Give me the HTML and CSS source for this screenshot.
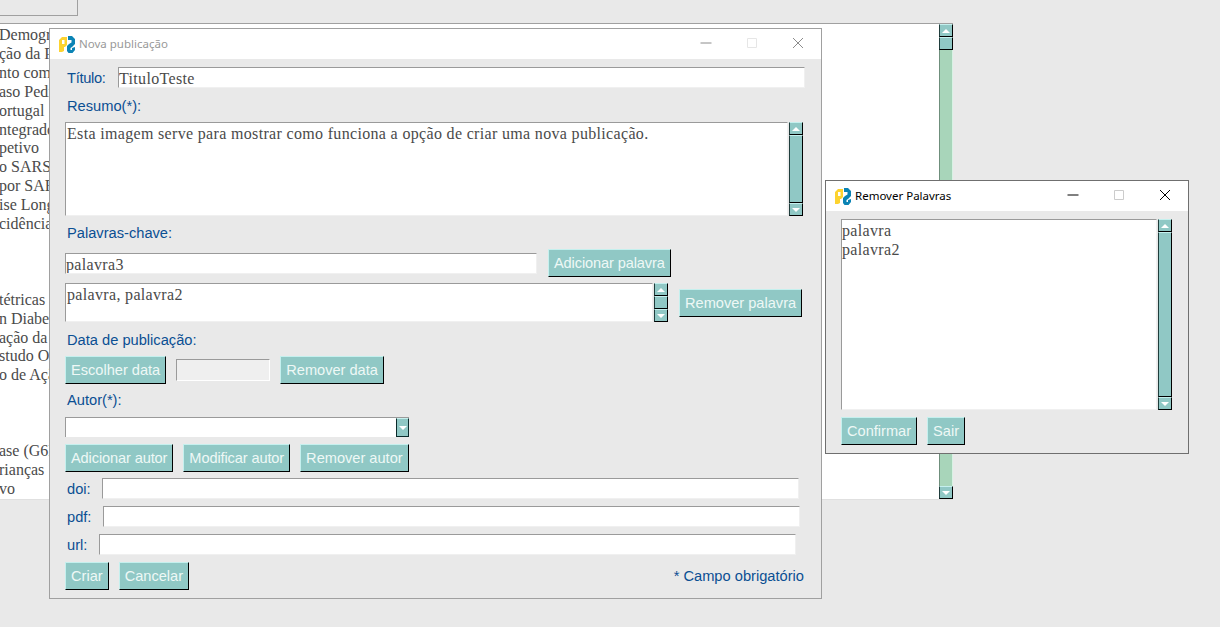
FILE: index.html
```html
<!DOCTYPE html>
<html lang="pt">
  <head>
    <meta charset="UTF-8" />
    <title>Publicações</title>
    <link rel="stylesheet" href="styles.css">
  </head>
  <body>
    <svg class="defs" width="0" height="0">
      <symbol id="logo" viewBox="0 0 16 17">
        <path fill="#fdd32f" fill-rule="evenodd" d="M0 4 L3 1 H8 V9 L6 11 H5 V15 L3 16 H0 Z M3 4 V8 H5.5 V4 Z" />
        <path fill="#0b84b5" d="M9 0 H13 L16 3 V8 L13 11 L11.5 12 V14 H13 V12 L16 11 V14 L13.5 17 H9.5 L8 15 V10 L10 8 L12.5 6.5 V4 H9 Z" />
      </symbol>
      <symbol id="win-min" viewBox="0 0 12 12"><path d="M0.5 6 H11.5" stroke="currentColor" fill="none" /></symbol>
      <symbol id="win-max" viewBox="0 0 12 12"><path d="M1.5 1.5 H10.5 V10.5 H1.5 Z" stroke="currentColor" fill="none" /></symbol>
      <symbol id="win-close" viewBox="0 0 12 12"><path d="M1 1 L11 11 M11 1 L1 11" stroke="currentColor" fill="none" /></symbol>
    </svg>

    <div class="desktop">
      <div class="top-tab"></div>

      <div class="list-window">
        <div class="list-lines">
          <div>Demográfico e Resultados de Doentes Hospitalizados</div>
          <div>ção da Pandemia</div>
          <div>nto com</div>
          <div>aso Pediátrico</div>
          <div>ortugal</div>
          <div>ntegrado</div>
          <div>petivo</div>
          <div>o SARS-CoV</div>
          <div>por SARS</div>
          <div>ise Longitudinal</div>
          <div>cidência</div>
          <div>&nbsp;</div>
          <div>&nbsp;</div>
          <div>&nbsp;</div>
          <div>tétricas</div>
          <div>n Diabetes</div>
          <div>ação da</div>
          <div>studo O</div>
          <div>o de Ação</div>
          <div>&nbsp;</div>
          <div>&nbsp;</div>
          <div>&nbsp;</div>
          <div>ase (G6PD)</div>
          <div>rianças</div>
          <div>vo</div>
        </div>
        <div class="scrollbar scrollbar-main">
          <div class="sb-btn sb-up"></div>
          <div class="sb-thumb sb-thumb-short"></div>
          <div class="sb-trough"></div>
          <div class="sb-btn sb-down"></div>
        </div>
      </div>

      <section class="dialog dialog-new">
        <header class="titlebar titlebar-inactive">
          <svg class="logo"><use href="#logo" /></svg>
          <span class="title">Nova publicação</span>
          <div class="win-controls">
            <svg class="win-icon"><use href="#win-min" /></svg>
            <svg class="win-icon win-icon-off"><use href="#win-max" /></svg>
            <svg class="win-icon"><use href="#win-close" /></svg>
          </div>
        </header>
        <div class="dialog-body">
          <div class="row row-title">
            <label class="lbl lbl-titulo">Título:</label>
            <input class="entry entry-titulo" type="text" value="TituloTeste" />
          </div>
          <label class="lbl block-lbl gap-10">Resumo(*):</label>
          <div class="row gap-8">
            <div class="text-box text-resumo">Esta imagem serve para mostrar como funciona a opção de criar uma nova publicação.</div>
            <div class="scrollbar">
              <div class="sb-btn sb-up"></div>
              <div class="sb-thumb"></div>
              <div class="sb-btn sb-down"></div>
            </div>
          </div>
          <label class="lbl block-lbl gap-9">Palavras-chave:</label>
          <div class="row row-center gap-8">
            <input class="entry entry-palavra" type="text" value="palavra3" />
            <button class="btn btn-tight btn-after-palavra">Adicionar palavra</button>
          </div>
          <div class="row row-center gap-6">
            <div class="text-box text-palavras">palavra, palavra2</div>
            <div class="scrollbar scrollbar-small">
              <div class="sb-btn sb-up"></div>
              <div class="sb-thumb"></div>
              <div class="sb-btn sb-down"></div>
            </div>
            <button class="btn btn-remove-palavra">Remover palavra</button>
          </div>
          <label class="lbl block-lbl gap-10">Data de publicação:</label>
          <div class="row row-center row-gap gap-8">
            <button class="btn">Escolher data</button>
            <div class="entry-date"></div>
            <button class="btn">Remover data</button>
          </div>
          <label class="lbl block-lbl gap-8">Autor(*):</label>
          <div class="combo gap-9">
            <div class="combo-arrow"></div>
          </div>
          <div class="row row-gap gap-7">
            <button class="btn btn-tight">Adicionar autor</button>
            <button class="btn btn-tight">Modificar autor</button>
            <button class="btn">Remover autor</button>
          </div>
          <div class="row row-center gap-6">
            <label class="lbl lbl-doi">doi:</label>
            <input class="entry entry-link" type="text" />
          </div>
          <div class="row row-center gap-7">
            <label class="lbl lbl-pdf">pdf:</label>
            <input class="entry entry-link" type="text" />
          </div>
          <div class="row row-center gap-7">
            <label class="lbl lbl-url">url:</label>
            <input class="entry entry-link" type="text" />
          </div>
          <div class="row row-center row-gap gap-7">
            <button class="btn">Criar</button>
            <button class="btn">Cancelar</button>
            <span class="required-note">* Campo obrigatório</span>
          </div>
        </div>
      </section>

      <section class="dialog dialog-remove">
        <header class="titlebar">
          <svg class="logo"><use href="#logo" /></svg>
          <span class="title">Remover Palavras</span>
          <div class="win-controls">
            <svg class="win-icon"><use href="#win-min" /></svg>
            <svg class="win-icon win-icon-off"><use href="#win-max" /></svg>
            <svg class="win-icon"><use href="#win-close" /></svg>
          </div>
        </header>
        <div class="dialog-body">
          <div class="row">
            <div class="text-box text-list">
              <div>palavra</div>
              <div>palavra2</div>
            </div>
            <div class="scrollbar">
              <div class="sb-btn sb-up"></div>
              <div class="sb-thumb"></div>
              <div class="sb-btn sb-down"></div>
            </div>
          </div>
          <div class="row row-gap gap-7">
            <button class="btn">Confirmar</button>
            <button class="btn">Sair</button>
          </div>
        </div>
      </section>
    </div>
  </body>
</html>
```

FILE: styles.css
```css
html,
body {
  height: 100%;
}

body {
  margin: 0;
  overflow: hidden;
  background: #e9e9e9;
  font: 14.67px "Liberation Sans", Arial, sans-serif;
}

.defs {
  position: absolute;
}

.desktop {
  position: relative;
  width: 1220px;
  height: 627px;
  overflow: hidden;
}

.top-tab {
  width: 77px;
  height: 15px;
  border-right: 1px solid #a0a0a0;
  border-bottom: 1px solid #a0a0a0;
}

/* windows sit on a free canvas */
.list-window {
  position: absolute;
  left: 0;
  top: 23px;
  width: 953px;
  height: 477px;
  display: flex;
  background: #fff;
  border-top: 1px solid #a0a0a0;
  border-bottom: 1px solid #e0e0e0;
  box-sizing: border-box;
}

.list-lines {
  flex: 1;
  overflow: hidden;
  white-space: nowrap;
  font: 16px/18.9px "Liberation Serif", serif;
  color: #4a4a4a;
  padding-top: 2px;
  text-indent: -1px;
}

.dialog {
  position: absolute;
  display: flex;
  flex-direction: column;
  box-sizing: border-box;
  background: #e9e9e9;
  border: 1px solid #a0a0a0;
}

.dialog-new {
  left: 49px;
  top: 28px;
  width: 773px;
  height: 571px;
}

.dialog-remove {
  left: 825px;
  top: 180px;
  width: 364px;
  height: 274px;
  border-color: #6f6f6f;
}

.titlebar {
  display: flex;
  align-items: center;
  height: 30px;
  background: #fff;
  color: #000;
  font: 11.5px "Noto Sans", sans-serif;
  padding-left: 9px;
  flex-shrink: 0;
}

.titlebar-inactive {
  color: #999;
}

.title {
  padding-bottom: 2px;
}

.logo {
  width: 16px;
  height: 17px;
  margin-right: 4px;
}

.win-controls {
  margin-left: auto;
  display: flex;
  gap: 34px;
  padding-right: 17px;
  padding-bottom: 2px;
  color: #000;
}

.titlebar-inactive .win-controls {
  color: #8c8c8c;
}

.win-icon {
  width: 12px;
  height: 12px;
}

.win-icon-off {
  color: #ccc;
}

.titlebar-inactive .win-icon-off {
  color: #e6e6e6;
}

.dialog-body {
  flex: 1;
  padding: 8px 15px 0;
  display: flex;
  flex-direction: column;
}

.row {
  display: flex;
}

.row-center {
  align-items: center;
}

.row-gap {
  gap: 10px;
}

.gap-6 { margin-top: 6px; }
.gap-7 { margin-top: 7px; }
.gap-8 { margin-top: 8px; }
.gap-9 { margin-top: 9px; }
.gap-10 { margin-top: 10px; }

.lbl {
  color: #0b4f93;
  line-height: 16px;
  margin-left: 2px;
}

.block-lbl {
  display: block;
}

.row-title {
  align-items: center;
}

.lbl-titulo {
  width: 49px;
  letter-spacing: -0.3px;
  margin-right: 2px;
}

.lbl-doi {
  width: 35px;
}

.lbl-pdf {
  width: 36px;
}

.lbl-url {
  width: 32px;
}

.entry,
.text-box,
.combo {
  box-sizing: border-box;
  background: #fff;
  border: 1px solid #f0f0f0;
  border-top-color: #9a9a9a;
  border-left-color: #9a9a9a;
}

.entry,
.text-box {
  font: 16px "Liberation Serif", serif;
  letter-spacing: 0.33px;
  color: #4a4a4a;
}

.entry {
  height: 21px;
  padding: 3px 0 0 0;
  outline: none;
}

.entry-titulo {
  width: 687px;
}

.entry-palavra {
  width: 472px;
}

.entry-link {
  width: 697px;
}

.btn-after-palavra {
  margin-left: 11px;
}

.text-box {
  padding: 1px 1px 0 1px;
  line-height: 19px;
}

.text-resumo {
  width: 723px;
  height: 94px;
}

.text-palavras {
  width: 588px;
  height: 39px;
}

.text-list {
  width: 316px;
  height: 191px;
  padding-top: 1px;
  padding-left: 0;
}

.entry-date {
  box-sizing: border-box;
  width: 94px;
  height: 22px;
  background: #efefef;
  border: 1px solid #fff;
  border-top-color: #9a9a9a;
  border-left-color: #9a9a9a;
}

.combo {
  width: 344px;
  height: 20px;
  display: flex;
  justify-content: flex-end;
  border-right: none;
  border-bottom: none;
}

.combo-arrow {
  box-sizing: border-box;
  width: 13px;
  background: #90c8c5;
  border: 1px solid #0a2a2a;
  border-top-color: #c5f0ee;
  display: flex;
  align-items: center;
  justify-content: center;
}

.combo-arrow::after,
.sb-down::after {
  content: "";
  border-left: 4px solid transparent;
  border-right: 4px solid transparent;
  border-top: 4px solid #fff;
}

.btn {
  box-sizing: border-box;
  height: 28px;
  padding: 0 5px;
  background: #90c8c5;
  color: #eef8f6;
  font: 14.6px "Liberation Sans", Arial, sans-serif;
  border: 1px solid #000;
  border-top-color: #c5f0ee;
  border-left-color: #c5f0ee;
  white-space: nowrap;
}

.btn-tight {
  letter-spacing: -0.12px;
}

.btn-remove-palavra {
  margin-left: 11px;
}

.required-note {
  margin-left: auto;
  margin-right: 2px;
  color: #0b4f93;
}

.scrollbar {
  display: flex;
  flex-direction: column;
  width: 14px;
  margin-left: 1px;
  flex-shrink: 0;
}

.scrollbar-small {
  height: 39px;
}

.scrollbar-main {
  margin-left: 0;
  background: #a8d5ba;
}

.sb-btn,
.sb-thumb {
  box-sizing: border-box;
  background: #90c8c5;
  border: 1px solid #000;
  border-top-color: #c5f0ee;
  border-left-color: #1f3d3c;
  flex-shrink: 0;
}

.sb-btn {
  height: 13px;
  display: flex;
  align-items: center;
  justify-content: center;
}

.sb-up::after {
  content: "";
  border-left: 4px solid transparent;
  border-right: 4px solid transparent;
  border-bottom: 4px solid #fff;
}

.sb-thumb {
  flex: 1;
}

.sb-thumb-short {
  flex: 0 0 13px;
}

.sb-trough {
  flex: 1;
  border-left: 1px solid #6f8f7c;
  border-right: 1px solid #d8f2e4;
}
```
